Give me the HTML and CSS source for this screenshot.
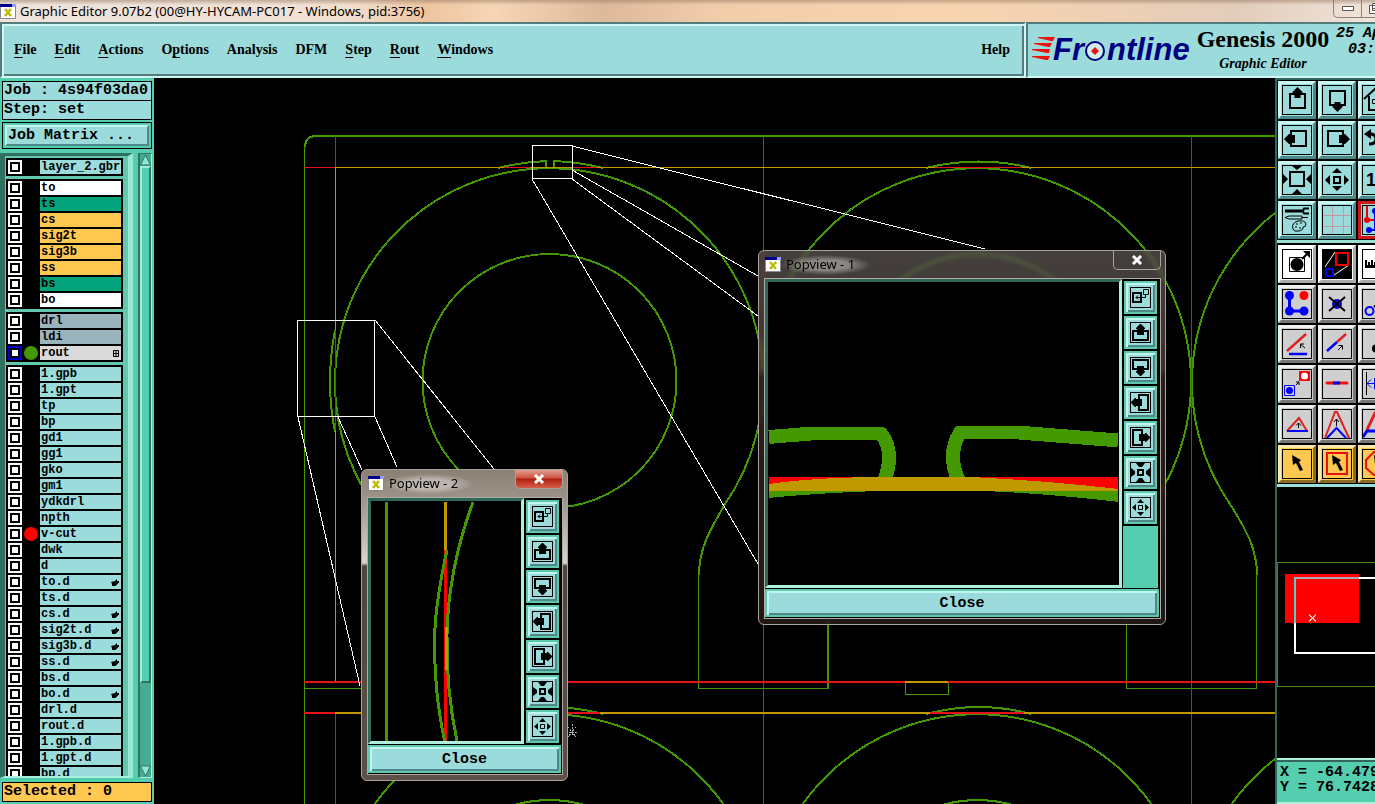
FILE: index.html
```html
<!DOCTYPE html><html lang="en"><head><meta charset="utf-8">
<title>Graphic Editor</title>
<link rel="stylesheet" href="styles.css">
</head><body>

<svg class="defs" aria-hidden="true">
<symbol id="app" viewBox="0 0 16 15"><path fill="#fff" stroke="#888" d="M.5.5h15v14H.5z"/><path fill="#008" d="M0 0h12v3H0z"/><path fill="#99f" d="M12 0h4v3h-4z"/><path stroke="#bb0" stroke-width="2.4" d="M5 5l6 7M11 5l-6 7"/></symbol>

<!-- 28x28, right toolbar -->
<symbol id="up" viewBox="0 0 28 28"><path fill="none" stroke="#000" stroke-width="2" d="M7 8h15v14H7z"/><path d="M14.500 1l5 5v1h-2v5h-6V7h-2V6z"/></symbol>
<symbol id="down" viewBox="0 0 28 28"><path fill="none" stroke="#000" stroke-width="2" d="M7 5h15v14H7z"/><path d="M14.500 26l5-5v-1h-2v-4h-6v4h-2v1z"/></symbol>
<symbol id="left" viewBox="0 0 28 28"><path fill="none" stroke="#000" stroke-width="2" d="M8 5h15v15H8z"/><path d="M1 13l5-5h1v1h5v8H7v1H6z"/></symbol>
<symbol id="right" viewBox="0 0 28 28"><path fill="none" stroke="#000" stroke-width="2" d="M5 5h15v15H5z"/><path d="M27 13l-5-5h-1v1h-5v8h5v1h1z"/></symbol>
<symbol id="zin" viewBox="0 0 28 28"><path fill="none" stroke="#000" stroke-width="2" d="M7 6h14v14H7z"/><path d="M9 0h10l-5 4zM9 28h10l-5-5zM0 8v10l5-5zM28 8v10l-5-5z"/></symbol>
<symbol id="zout" viewBox="0 0 28 28"><path fill="none" stroke="#000" stroke-width="2" d="M11 11h6v6h-6z"/><path d="M14 2l5 5H9zM14 25l5-5H9zM2 14l5-5v10zM26 14l-5-5v10z"/></symbol>
<symbol id="home" viewBox="0 0 28 28"><path fill="none" stroke="#000" stroke-width="2" d="M1 13L14 1l13 12M6 10v14h17V10"/><path fill="none" stroke="#000" d="M9.500 13.500h4v4h-4z"/></symbol>
<symbol id="back" viewBox="0 0 28 28"><path d="M1 8l7-5v10z"/><path fill="none" stroke="#000" stroke-width="3" d="M7 8q6 0 6 5t-7 5"/></symbol>
<symbol id="tools" viewBox="0 0 28 28"><path stroke="#000" stroke-width="3" d="M2 5h17"/><path fill="none" stroke="#000" stroke-width="2" d="M26 2.500h-5q-2 2.500 0 5h5"/><path fill="none" stroke="#000" d="M2 11.500l4-1.500h13v3H6zM19 11.500h6M10 23q-2-6 5-8 7-1 8 3 0 3-3 3 0 4-5 4-4 1-5-2z"/><path fill="none" stroke="#000" d="M13 18h2M17 17h2M12 21h2M16 22h2"/></symbol>
<symbol id="grid" viewBox="0 0 28 28"><path stroke="#c09aa0" d="M9.500 0v28M20.500 0v28M0 9.500h28M0 20.500h28"/></symbol>
<symbol id="net" viewBox="0 0 28 28"><path fill="none" stroke="#e00" stroke-width="2" d="M4 0v14h10"/><circle cx="4" cy="14" r="3" fill="#e00"/><path fill="none" stroke="#00e" stroke-width="2" d="M12 5v19H7"/><circle cx="12" cy="5" r="3" fill="#00e"/><circle cx="6" cy="24" r="3" fill="#00e"/></symbol>

<symbol id="pad" viewBox="0 0 28 28"><path fill="none" stroke="#000" d="M6.500 7.500h15v14h-15z"/><circle cx="14" cy="14.500" r="6.500"/><path stroke="#000" stroke-width="2" d="M19 9l6-6"/><path d="M20 1h7v7z"/></symbol>
<symbol id="popv" viewBox="0 0 28 28"><path d="M0 0h28v28H0z"/><path stroke="#fff" d="M2 17L12 2M11 25l15-10"/><path fill="none" stroke="#e00" stroke-width="2" d="M13 3h12v12H13z"/><path fill="none" stroke="#00e" stroke-width="2" d="M3 19h7v7H3z"/></symbol>
<symbol id="ruler" viewBox="0 0 28 28"><path d="M2 15h26v3H2zM2 10h2v6H2zM5 12h2v4H5zM8 10h2v6H8zM11 12h2v4h-2z"/></symbol>
<symbol id="chain" viewBox="0 0 28 28"><path fill="none" stroke="#00f" stroke-width="3" d="M6.500 6v15H21"/><g fill="#00f"><circle cx="6.500" cy="5.500" r="4.500"/><circle cx="6.500" cy="21" r="4.500"/><circle cx="21" cy="21" r="4.500"/></g><circle cx="21" cy="5.500" r="4.500" fill="#f00"/></symbol>
<symbol id="cross" viewBox="0 0 28 28"><circle cx="14" cy="14" r="5" fill="#00d"/><path stroke="#000" stroke-width="2" d="M6 7l16 14M22 7L6 21"/></symbol>
<symbol id="copy" viewBox="0 0 28 28"><circle cx="6.500" cy="21" r="4" fill="none" stroke="#00f" stroke-width="2"/><path stroke="#000" stroke-width="2" d="M11 17l3-3"/></symbol>
<symbol id="angle" viewBox="0 0 28 28"><path stroke="#d22" stroke-width="2.500" d="M4 21L23 4"/><path stroke="#00f" stroke-width="2.500" d="M6 24h18"/><path fill="none" stroke="#000" d="M22 18l-5-4M17.500 18v-4H21"/></symbol>
<symbol id="line" viewBox="0 0 28 28"><path stroke="#00f" stroke-width="2.500" d="M4 21l10-9"/><path stroke="#d22" stroke-width="2.500" d="M14 12l9-8"/><path fill="none" stroke="#000" d="M15 20l4-4M15.500 15.500h4v4"/></symbol>
<symbol id="blob" viewBox="0 0 28 28"><circle cx="13" cy="18.500" r="4"/></symbol>
<symbol id="resz" viewBox="0 0 28 28"><path fill="#f00" d="M16 1h11v10H16z"/><circle cx="21.500" cy="6" r="3.500" fill="#fff"/><path fill="none" stroke="#00f" d="M1.500 15.500h10v10h-10z"/><circle cx="6.500" cy="20.500" r="3.500" fill="#00f"/><path fill="none" stroke="#000" d="M13 15l3-3M13 12h3v3"/></symbol>
<symbol id="seg" viewBox="0 0 28 28"><path stroke="#e11" stroke-width="3" stroke-linecap="round" d="M4 13h20"/><path stroke="#00f" stroke-width="3" d="M10 13h7"/></symbol>
<symbol id="stretch" viewBox="0 0 28 28"><path stroke="#000" d="M3.500 2v23"/><path fill="none" stroke="#00f" d="M4 13.500h8M8 9.500l-4 4 4 4M11.500 8v11H28"/></symbol>
<symbol id="tri" viewBox="0 0 28 28"><path fill="none" stroke="#d22" stroke-width="2" d="M4 21L16 8l8 13"/><path stroke="#00f" stroke-width="2" d="M4 21h21"/><path fill="none" stroke="#000" d="M15.500 18v-5M13 15.500l2.500-2.500 2.500 2.500"/></symbol>
<symbol id="peak" viewBox="0 0 28 28"><path fill="none" stroke="#d22" stroke-width="2" d="M2 28L12 2h2l12 26"/><path fill="none" stroke="#00f" stroke-width="2" d="M4 28l9.500-10L23 28"/><path fill="none" stroke="#000" d="M13.500 16V9M11 12l2.500-3 2.500 3"/></symbol>
<symbol id="trap" viewBox="0 0 28 28"><path fill="none" stroke="#d22" stroke-width="3" d="M4 20l8-17h8"/><path fill="none" stroke="#00f" stroke-width="3" d="M0 27l4-6h24"/><path stroke="#000" d="M12.500 16V9"/></symbol>
<symbol id="sel" viewBox="0 0 28 28"><path d="M9 5l9 5-2 2 4 8-3 1-4-8-3 2z"/></symbol>
<symbol id="selbox" viewBox="0 0 28 28"><path fill="none" stroke="#e11" stroke-width="2" d="M4 3h20v21H4z"/><path d="M9 5l9 5-2 2 4 8-3 1-4-8-3 2z"/></symbol>
<symbol id="seloct" viewBox="0 0 28 28"><path fill="none" stroke="#e11" stroke-width="2" d="M11 2h8l8 8v8l-8 7h-8l-8-7v-8z"/><path d="M11 5l9 5-2 2 4 8-3 1-4-8-3 2z"/></symbol>

<!-- 19x19, popview toolbar -->
<symbol id="p-pop" viewBox="0 0 19 19"><path fill="none" stroke="#000" stroke-width="2" d="M2 5h8v9H2z"/><path fill="none" stroke="#000" d="M12.500 1.500h5v5h-5zM14.500 7v2.500H5M7 7.500l-2 2 2 2"/></symbol>
<symbol id="p-up" viewBox="0 0 19 19"><path fill="none" stroke="#000" stroke-width="2" d="M2 8h15v9H2z"/><path d="M9 1h1l4 4v1h-1v6H6V6H5V5z"/></symbol>
<symbol id="p-down" viewBox="0 0 19 19"><path fill="none" stroke="#000" stroke-width="2" d="M2 2h15v9H2z"/><path d="M9 18h1l4-4v-1h-1V8H6v5H5v1z"/></symbol>
<symbol id="p-left" viewBox="0 0 19 19"><path fill="none" stroke="#000" stroke-width="2" d="M8 2h9v15H8z"/><path d="M0 9v1l4 4h1v-1h6V6H5V5H4z"/></symbol>
<symbol id="p-right" viewBox="0 0 19 19"><path fill="none" stroke="#000" stroke-width="2" d="M2 2h9v15H2z"/><path d="M19 9v1l-4 4h-1v-1H8V6h6V5h1z"/></symbol>
<symbol id="p-in" viewBox="0 0 19 19"><path fill="none" stroke="#000" stroke-width="2" d="M7 7h5v5H7z"/><path d="M5 0h9l-3 4H8zM5 19h9l-3-4H8zM0 5v9l4-3V8zM19 5v9l-4-3V8z"/></symbol>
<symbol id="p-out" viewBox="0 0 19 19"><path fill="none" stroke="#000" d="M7.500 7.500h4v4h-4z"/><path d="M9.500 1L13 5H6zM9.500 18l3.500-4H6zM1 9.500L5 6v7zM18 9.500L14 6v7z"/></symbol>
</svg>

<header class="titlebar">
<svg class="appicon"><use href="#app"/></svg>
<span class="wintitle">Graphic Editor 9.07b2 (00@HY-HYCAM-PC017 - Windows, pid:3756)</span>
<div class="winbtns">
<button aria-label="Minimize"><svg width="12" height="5"><path fill="#fff" stroke="#555" d="M.5.5h11v4H.5z"/></svg></button>
<button aria-label="Restore"><svg width="14" height="11"><path fill="#fff" stroke="#555" d="M3.500.5h10v7h-10zM.5 2.500h9v8h-9zM3.500 5.500h3v2h-3z"/></svg></button>
</div>
</header>

<div class="top">
<nav class="menubar">
<button><u>F</u>ile</button>
<button><u>E</u>dit</button>
<button><u>A</u>ctions</button>
<button>O<u>p</u>tions</button>
<button>Analysis</button>
<button>DFM</button>
<button><u>S</u>tep</button>
<button><u>R</u>out</button>
<button><u>W</u>indows</button>
<button class="help">Help</button>
</nav>
<div class="brand">
<svg class="logo" viewBox="0 0 164 40">
<path fill="#e11" d="M6 6h17l-2 4H19L6 7zM2 12h18l-2 4h-2L2 13zM0 18h18l-1 4h-2L0 19zM0 25h18l-2 4h-2L0 26z"/>
<text x="21" y="29">Fr</text>
<circle cx="63" cy="20" r="9" fill="#cfeeee" stroke="#000080" stroke-width="2"/>
<path fill="#e11" d="M63 16l4 4-4 4-4-4z"/>
<text x="75" y="29">ntline</text>
</svg>
<div class="product"><b>Genesis 2000</b><i>Graphic Editor</i></div>
<div class="clock"><span>25 Ap</span><span class="time">03:</span></div>
</div>
</div>

<main>
<aside class="side">
<div class="info">Job : 4s94f03da0</div>
<div class="info">Step: set</div>
<div class="matrix"><button>Job Matrix ...</button></div>
<div class="listarea">
<div class="layers" id="layers"></div>
<div class="scroll">
<svg width="11" height="12"><path fill="#8fe8d0" stroke="#2e7565" d="M5.500 1l5 10H.5z"/></svg>
<div class="thumb"></div>
<svg class="last" width="11" height="12"><path fill="#8fe8d0" stroke="#2e7565" d="M5.500 11L.5 1h10z"/></svg>
</div>
</div>
<div class="selected">Selected : 0</div>
</aside>

<section class="canvas">
<svg class="board" viewBox="154 78 1121 726" preserveAspectRatio="xMinYMin slice">
<defs>
<g id="ring">
<path stroke-width="2" d="M400 575C400 545 385 524 373 504A214 214 0 1 1 725 504C714 524 699 545 699 575"/>
<path d="M399.500 575V688M698.500 575V688"/>
<circle stroke-width="2" cx="549.500" cy="381" r="127"/>
</g>
</defs>
<!-- routing contour -->
<g class="rout">
<path stroke-width="2" d="M1280 136H316Q305 136 305 147"/>
<path d="M304.500 146V804M304.500 688.500H400"/>
<use href="#ring"/><use href="#ring" x="428"/><use href="#ring" x="857"/>
<use href="#ring" y="546"/><use href="#ring" x="428" y="546"/><use href="#ring" x="857" y="546"/>
<path stroke-width="2" d="M498 168Q522 162 546 161V167M603 168Q578 162 554 161V167M926 168Q979 155 1031 168M498 714Q549 700 603 714M926 714Q979 700 1031 714M335 330Q325 382 335 432"/>
<path d="M698 688.500H828.500V620M1126.500 620V688.500H1257"/>
<path d="M905 682V694.500H948V682"/>
</g>
<!-- v-cut -->
<g class="vcut">
<path d="M763.500 136V804M1191.500 136V804M335.500 136V167M304 167.500H335M335.500 713V804"/>
<path class="both" d="M335.500 167V682M335 167.500H1275"/>
<path d="M504 167.500H530M572 167.500H597M935 167.500H1022M335.500 330V430"/>
<path stroke-width="2" d="M304 682H1275M304 713H335M568 713H600M930 713H1024"/>
<path class="both" stroke-width="2" d="M335 713H568M600 713H930M1024 713H1275M905 682H948"/>
</g>
<!-- popview areas -->
<g class="zoomed">
<path d="M532.500 145.500H572.500V178.500H532.500zM297.500 320.500H374.500V416.500H297.500z"/>
<path d="M572 146L985 249M572 170L758 276M572 179L758 316M532 179L758 564M375 320L494 469M375 417L397 467M338 417L362 470M298 417L360 686"/>
</g>
<path stroke="#aaa" d="M568 727l8 10M576 727l-8 10M566 732h11M572.500 724v12" stroke-dasharray="2 1"/>
</svg>

<div class="popview pop1">
<div class="poptitle"><svg class="appicon"><use href="#app"/></svg><span class="wintitle">Popview - 1</span><button class="x" aria-label="Close window"><svg width="12" height="10"><path stroke="#fff" stroke-width="3" d="M2 1l8 8M10 1L2 9"/></svg></button></div>
<div class="popbody">
<svg class="view" viewBox="768 281 351 306" preserveAspectRatio="none">
<g fill="none" stroke="#490" stroke-width="14" stroke-linejoin="round">
<path d="M769 437.500L812 434H881Q889 444 889 458 889 470 884 482"/>
<path d="M1118 441L1018 433H960Q953 444 953 458 953 470 959 482"/>
</g>
<path fill="#f00" d="M769 478H1118V492H769z"/>
<path fill="#490" d="M769 492H1118V503Q1040 494 980 492H880Q820 494 769 499z"/>
<path fill="#c09800" d="M769 485Q810 479 870 478H972Q1050 482 1118 490V492H769z"/>
</svg>
<div class="poptools"></div>
<button class="close">Close</button>
</div>
</div>

<div class="popview pop2">
<div class="poptitle"><svg class="appicon"><use href="#app"/></svg><span class="wintitle">Popview - 2</span><button class="x" aria-label="Close window"><svg width="12" height="10"><path stroke="#fff" stroke-width="3" d="M2 1l8 8M10 1L2 9"/></svg></button></div>
<div class="popbody">
<svg class="view" viewBox="371 501 150 240" preserveAspectRatio="none">
<g fill="none" stroke="#490" stroke-width="3">
<path stroke="#f00" d="M445.500 548V741"/>
<path d="M386.500 502V741M447 550C438 590 434 625 434.500 650 435 690 440 720 444.500 741"/>
<path d="M473 502Q448 570 447 635 446 690 457 741"/>
<path stroke="#c09800" d="M445.500 502V550M446.500 627V670"/>
</g>
</svg>
<div class="poptools"></div>
<button class="close">Close</button>
</div>
</div>
</section>

<aside class="right">
<div class="tools" id="tools1"></div>
<div class="tools edit" id="tools2"></div>
<svg class="navmap" viewBox="1277 487 98 270" preserveAspectRatio="xMinYMin slice">
<path fill="none" stroke="#3c8a20" d="M1380 562.500H1277.500V685.500H1380"/>
<path fill="#f00" d="M1285 574H1359V622H1285z"/>
<path fill="none" stroke="#fff" stroke-width="2" d="M1380 578H1295V652H1380"/>
<path fill="none" stroke="#b0a8a8" stroke-width="2" d="M1294 578H1359"/>
<path fill="none" stroke="#5cc" stroke-width="2" d="M1295 577V622"/>
<path stroke="#ccc" d="M1309 614l7 7M1316 614l-7 7"/>
</svg>
<div class="coords">X = -64.479<br>Y = 76.7428</div>
</aside>
</main>

<script>
// name, color class, mark (dot color or icon); empty line = new group
var LAYERS = `layer_2.gbr

to white
ts green
cs gold
sig2t gold
sig3b gold
ss gold
bs green
bo white

drl gray
ldi gray
rout light rdot

1.gpb
1.gpt
tp
bp
gd1
gg1
gko
gm1
ydkdrl
npth
v-cut - vdot
dwk
d
to.d - hand
ts.d
cs.d - hand
sig2t.d - hand
sig3b.d - hand
ss.d - hand
bs.d
bo.d - hand
drl.d
rout.d
1.gpb.d
1.gpt.d
bp.d`;
var HAND = '<svg width="8" height="7"><path d="M0 3l4-1 2-2v2h2v2H7v1H6v1H5v1H1V5z"/></svg>';
var PLUS = '<svg width="6" height="7"><path fill="none" stroke="#000" d="M.5.5h5v6h-5zM3 0v7M0 3.500h6"/></svg>';

document.getElementById("layers").innerHTML = LAYERS.split("\n\n").map(function(group) {
	return "<div class=group>" + group.split("\n").map(function(line) {
		var a = line.split(" ");
		var mark = a[2] || "";
		return "<label class='layer " + mark + "'><input type=checkbox><i></i><span class='name " + (a[1] || "") + "'>" + a[0]
			+ (mark == "hand" ? HAND : mark == "rdot" ? PLUS : "") + "</span></label>";
	}).join("") + "</div>";
}).join("");

function makeTools(el, names, prefix) {
	el.innerHTML = names.split(" ").map(function(n) {
		var icon = n == "one" ? "<b>1</b>" : "<svg><use href='#" + prefix + n + "'/></svg>";
		return "<button class='tool " + n + "' aria-label='" + n + "'>" + icon + "</button>";
	}).join("");
}
makeTools(document.getElementById("tools1"), "up down home left right back zin zout one tools grid net", "");
makeTools(document.getElementById("tools2"), "pad popv ruler chain cross copy angle line blob resz seg stretch tri peak trap sel selbox seloct", "");
document.querySelectorAll(".poptools").forEach(function(el) {
	makeTools(el, "pop up down left right in out", "p-");
});
</script>
</body></html>
```
FILE: styles.css
```css
* {
	box-sizing: border-box;
}
body {
	margin: 0;
	height: 100vh;
	display: flex;
	flex-direction: column;
	overflow: hidden;
	background: #000;
	color: #000;
	font-family: "Liberation Mono", monospace;
	font-size: 15px;
}
button {
	font: inherit;
	color: inherit;
	margin: 0;
	padding: 0;
	border: none;
	background: none;
}
svg {
	display: block;
	flex: none;
}
.defs {
	position: absolute;
	width: 0;
	height: 0;
}
.appicon {
	width: 16px;
	height: 15px;
}
.wintitle {
	font-family: "Noto Sans", "Open Sans", sans-serif;
	font-size: 13px;
	line-height: 18px;
	white-space: nowrap;
}

/* title bar */
.titlebar {
	flex: none;
	height: 22px;
	display: flex;
	align-items: center;
	gap: 4px;
	background: linear-gradient(#96786088, #fff0 5px), linear-gradient(90deg, #eee4dc, #f2e0d2 25%, #eec4a0 31%, #f6d6b6 36%, #ddb89a 44%, #f2cdac 52%, #f8d4b0 70%, #efd0b4 80%, #e2cdbb 90%, #f0e4da);
}
.winbtns {
	align-self: flex-start;
	margin-left: auto;
	flex: none;
	width: 42px;
	height: 18px;
	display: flex;
	overflow: hidden;
	border: 1px solid #93827a;
	border-top: none;
	border-right: none;
	border-bottom-left-radius: 5px;
}
.winbtns button {
	flex: none;
	width: 28px;
	display: grid;
	place-items: center;
	border-right: 1px solid #93827a;
}

/* menu bar + brand */
.top {
	flex: none;
	height: 56px;
	display: flex;
	background: #9bdbdb;
	font-family: "Liberation Serif", serif;
	font-weight: bold;
}
.menubar, .brand {
	border: 2px solid;
	border-color: #557c7c #d0f6f6 #d0f6f6 #557c7c;
}
.menubar {
	flex: 1;
	display: flex;
	align-items: center;
	gap: 18px;
	padding: 0 14px 0 12px;
	font-size: 14px;
	box-shadow: inset 2px 2px #d0f6f6, inset -2px -2px #557c7c;
}
.menubar u {
	text-underline-offset: 3px;
}
.help {
	margin-left: auto;
}
.brand {
	flex: none;
	width: 349px;
	display: flex;
	overflow: hidden;
	border-right: none;
}
.logo {
	width: 164px;
	height: 40px;
	margin: 7px 0 0 4px;
}
.logo text {
	font: italic bold 31px "Liberation Sans", sans-serif;
	fill: #000080;
}
.product {
	flex: none;
	width: 134px;
	display: flex;
	flex-direction: column;
	align-items: center;
}
.product b {
	font-size: 24px;
	line-height: 30px;
	white-space: nowrap;
}
.product i {
	font-size: 14px;
	line-height: 20px;
}
.clock {
	flex: none;
	padding: 2px 0 0 6px;
	display: flex;
	flex-direction: column;
	font: italic bold 15px/16px "Liberation Mono", monospace;
	white-space: nowrap;
}
.time {
	padding-left: 12px;
}

main {
	flex: 1;
	min-height: 0;
	display: flex;
}

/* layer list */
.side {
	flex: none;
	width: 154px;
	display: flex;
	flex-direction: column;
	padding: 3px 2px 2px;
	background: #54ceae;
}
.info, .selected {
	flex: none;
	border: 1px solid #000;
	background: #9bdbdb;
	height: 20px;
	line-height: 18px;
	padding-left: 1px;
	font-weight: bold;
	white-space: nowrap;
	overflow: hidden;
}
.info + .info {
	margin-top: -1px;
}
.matrix {
	flex: none;
	margin-top: 2px;
	height: 27px;
	padding: 2px;
	border: 1px solid #000;
}
.matrix button {
	width: 100%;
	height: 21px;
	text-align: left;
	padding-left: 1px;
	background: #9bdbdb;
	border: 2px solid;
	border-color: #c0f6f0 #4f8888 #4f8888 #c0f6f0;
	font-weight: bold;
	line-height: 17px;
}
.listarea {
	flex: 1;
	min-height: 0;
	display: flex;
	margin: 4px 0 0 -2px;
	gap: 5px;
}
.layers {
	width: 133px;
	overflow: hidden;
	display: flex;
	flex-direction: column;
	gap: 3px;
	padding: 2px 5px 0 1px;
	background: #64c8b0;
	border: solid;
	border-width: 3px 5px 2px 5px;
	border-color: #2f7060 #98e8d4 #a8f0e0 #2f7060;
}
.group {
	flex: none;
	padding: 1px 2px;
	background: #000;
}
.layer {
	display: flex;
	height: 16px;
	align-items: center;
	font-size: 12px;
	font-weight: bold;
	line-height: 14px;
}
.layer input {
	appearance: none;
	flex: none;
	margin: 0;
	width: 14px;
	height: 14px;
	border: 2px solid #fff;
	background: #fff;
	box-shadow: inset 0 0 0 2px #000;
}
.layer i {
	flex: none;
	width: 14px;
	height: 14px;
	margin: 0 2px;
	border-radius: 50%;
}
.rdot i {
	background: #490;
}
.rdot input {
	border-color: #00c;
}
.vdot i {
	background: #f00;
}
.name {
	flex: 1;
	min-width: 0;
	height: 14px;
	display: flex;
	align-items: center;
	justify-content: space-between;
	padding: 0 2px 0 1px;
	background: #9bdbdb;
	white-space: nowrap;
}
.white { background: #fff; }
.green { background: #04a47c; }
.gold { background: #ffc850; }
.gray { background: #9ab4be; }
.light { background: #dadada; }

.scroll {
	width: 14px;
	display: flex;
	flex-direction: column;
	align-items: center;
	background: #45ab92;
	border: 2px solid;
	border-width: 1px 1px 1px 2px;
	border-color: #2e7565 #a8f0e0 #a8f0e0 #2e7565;
}
.thumb {
	width: 100%;
	height: 83%;
	background: #54ceae;
	border: 2px solid;
	border-color: #a0eed8 #2e7565 #2e7565 #a0eed8;
}
.last {
	margin-top: auto;
}
.selected {
	margin-top: 4px;
	background: #ffc850;
}

/* drawing */
.canvas {
	flex: 1;
	min-width: 0;
	position: relative;
	overflow: hidden;
	background: #000;
}
.board {
	width: 100%;
	height: 100%;
}
.board, .view, .navmap {
	shape-rendering: crispEdges;
}
.rout {
	fill: none;
	stroke: #490;
}
.vcut {
	fill: none;
	stroke: #e41414;
}
.both {
	stroke: #c09800;
}
.zoomed {
	fill: none;
	stroke: #fff;
}

/* popview windows */
.popview {
	position: absolute;
	display: flex;
	flex-direction: column;
	padding: 0 4px 5px 5px;
	border: 1px solid #a8a29c;
	border-radius: 6px;
	backdrop-filter: blur(2px);
}
.pop1 {
	left: 604px;
	top: 172px;
	width: 408px;
	height: 375px;
	background: linear-gradient(#645c58b0, #504844b0 32%, #2c2422d8 34%, #241c1ad8);
}
.pop2 {
	left: 207px;
	top: 391px;
	width: 207px;
	height: 312px;
	background: linear-gradient(#8c8074, #9a9086 8%, #d8d4d0 30%, #50443e 31%, #5c5048);
}
.poptitle {
	flex: none;
	height: 27px;
	display: flex;
	align-items: center;
	padding-left: 1px;
}
.poptitle .wintitle {
	padding: 0 16px 2px 5px;
	background: radial-gradient(closest-side, #ffffff60 50%, #fff0);
}
.x {
	align-self: flex-start;
	margin-left: auto;
	width: 48px;
	height: 19px;
	display: grid;
	place-items: center;
	border: 1px solid #a8a29c;
	border-top: none;
	border-radius: 0 0 5px 5px;
}
.pop2 .x {
	background: linear-gradient(#e0a090, #cc5040 45%, #b02010 50%, #d86048);
}
.popbody {
	flex: 1;
	min-height: 0;
	display: grid;
	grid-template-columns: 1fr 37px;
	grid-template-rows: 1fr 28px;
	row-gap: 1px;
	border: 1px solid #b0aaa4;
	background: #000;
	padding: 0 1px 1px 0;
}
.view {
	width: 100%;
	height: 100%;
	min-height: 0;
	border: 3px solid;
	border-color: #2f6858 #b0eedd #b0eedd #2f6858;
	background: #000;
}
.poptools {
	display: flex;
	flex-direction: column;
	align-items: center;
	gap: 2px;
	padding-top: 2px;
	overflow: hidden;
}
.poptools .tool, .close {
	background: #9bdbdb;
	border: 2px solid #5fc8ac;
	box-shadow: inset 2px 2px #c0f6f0, inset -2px -2px #4f8888;
}
.poptools .tool {
	flex: none;
	width: 33px;
	height: 33px;
	display: grid;
	place-items: center;
}
.poptools svg {
	width: 21px;
	height: 21px;
	border: 1px solid #000;
}
.poptools::after {
	content: "";
	flex: 1;
	width: 35px;
	background: #54ceae;
}
.close {
	grid-column: 1 / 3;
	font-weight: bold;
}

/* right toolbar */
.right {
	flex: none;
	width: 100px;
	display: flex;
	flex-direction: column;
	overflow: hidden;
	border-left: 2px solid #33665c;
}
.tools {
	flex: none;
	width: 120px;
	display: grid;
	grid-template-columns: repeat(3, 38px);
	gap: 2px;
	padding: 1px;
	border-top: 2px solid #33665c;
	border-bottom: 3px solid #9be0d4;
	background: #000;
}
.tools .tool {
	width: 38px;
	height: 38px;
	padding: 1px;
	background: #9bdbdb;
	border: 3px solid;
	border-color: #c8f8f4 #4f8888 #4f8888 #c8f8f4;
}
.tools .tool svg, .tools .tool b {
	width: 30px;
	height: 30px;
	border: 1px solid #000;
}
.tools .tool b {
	display: block;
	padding-left: 3px;
	text-align: left;
	font: bold 18px/28px "Liberation Sans", sans-serif;
}
.tools .net {
	border-color: #d01818;
}
.edit {
	padding-top: 2px;
	border-top-width: 0;
}
.edit .tool {
	background: #cfcfcf;
	border-color: #f0f0f0 #777 #777 #f0f0f0;
}
.edit .pad, .edit .popv, .edit .ruler {
	background: #fff;
	border-color: #fff #aaa #aaa #fff;
}
.edit .sel, .edit .selbox, .edit .seloct {
	background: #ffc850;
	border-color: #ffe8a8 #8c6c20 #8c6c20 #ffe8a8;
}
.navmap {
	flex: 1;
	min-height: 0;
	width: 98px;
	background: #000;
}
.coords {
	flex: none;
	height: 46px;
	padding: 5px 0 0 3px;
	border-top: 2px solid #b0eedd;
	border-bottom: 2px solid #b0eedd;
	background: #54ceae;
	box-shadow: inset 0 2px #33665c;
	font-weight: bold;
	line-height: 15px;
	white-space: nowrap;
}
```
